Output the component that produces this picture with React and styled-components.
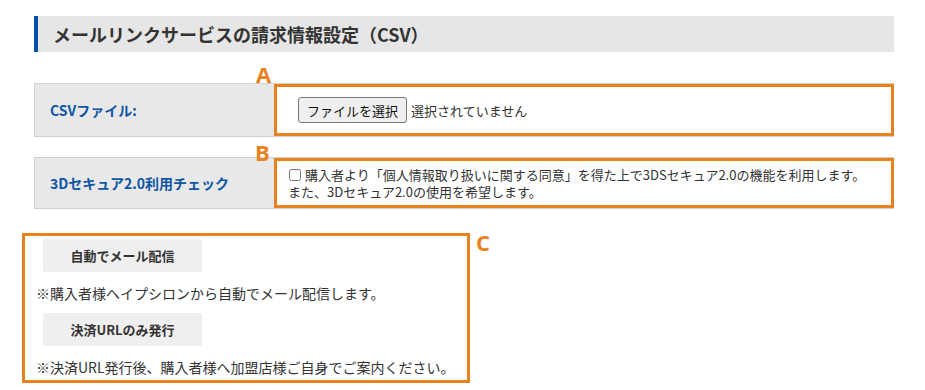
import React from 'react'
import styled, { createGlobalStyle } from 'styled-components'

const ORANGE = '#e8821e'

const GlobalStyle = createGlobalStyle`
  body {
    margin: 0;
    background: #fff;
    font-family: "Noto Sans CJK JP", "Open Sans", sans-serif;
    color: #333;
  }
  * { box-sizing: border-box; }
`

const Page = styled.div`
  width: 894px;
  padding: 16px 0 0 34px;
`

const Title = styled.h2`
  margin: 0;
  height: 36px;
  display: flex;
  align-items: center;
  padding-left: 15px;
  background: #e6e6e6;
  border-left: 4px solid #0a4fa0;
  font-size: 18px;
  font-weight: 700;
  color: #333;
`

const Rows = styled.div`
  display: flex;
  flex-direction: column;
  gap: 20px;
  margin-top: 31px;
`

const Row = styled.div`
  display: grid;
  grid-template-columns: 240px 1fr;
  height: ${p => p.$h}px;
  border-top: 1px solid #d2d2d2;
  border-bottom: 1px solid #d2d2d2;
`

const Label = styled.div`
  display: flex;
  align-items: center;
  padding-left: 15px;
  background: #e8e8e8;
  border-left: 1px solid #d2d2d2;
  font-size: 14px;
  font-weight: 700;
  color: #0d55a5;
`

const Value = styled.div`
  position: relative;
  display: flex;
  align-items: center;
  border: 3px solid ${ORANGE};
  padding-left: ${p => p.$pad}px;
  font-size: 13px;
  color: #333;
`

const Mark = styled.span`
  position: absolute;
  font-family: "Open Sans", "Liberation Sans", sans-serif;
  font-weight: 700;
  font-size: 22px;
  line-height: 22px;
  color: ${ORANGE};
  left: ${p => p.$left}px;
  top: ${p => p.$top}px;
`

const FileButton = styled.button`
  height: 26px;
  padding: 0 8px;
  margin-right: 4px;
  background: #efefef;
  border: 1px solid #767676;
  border-radius: 3px;
  font: inherit;
  font-size: 13px;
  color: #111;
`

const CheckText = styled.label`
  line-height: 17.5px;
  input {
    width: 12px;
    height: 12px;
    margin: 0 4px 0 1px;
    vertical-align: -1px;
  }
`

const SendBox = styled.div`
  position: relative;
  width: 448px;
  height: 150px;
  margin: 24px 0 0 -12px;
  padding: 3px 0 0 11px;
  border: 3px solid ${ORANGE};
`

const SendButton = styled.button`
  display: block;
  width: 159px;
  height: 33px;
  margin-left: 7px;
  border: none;
  border-radius: 2px;
  background: #efefef;
  font: inherit;
  font-size: 13px;
  font-weight: 700;
  color: #333;
`

const Note = styled.p`
  margin: 11px 0 10px;
  font-size: 14px;
  line-height: 20px;
  color: #333;
  white-space: nowrap;
`

export default function App() {
  return (
    <Page>
      <GlobalStyle />
      <Title>メールリンクサービスの請求情報設定（CSV）</Title>
      <Rows>
        <Row $h={54}>
          <Label>CSVファイル:</Label>
          <Value $pad={21}>
            <Mark $left={-21} $top={-24}>A</Mark>
            <FileButton type="button">ファイルを選択</FileButton>
            <span>選択されていません</span>
          </Value>
        </Row>
        <Row $h={52}>
          <Label>3Dセキュア2.0利用チェック</Label>
          <Value $pad={11}>
            <Mark $left={-22} $top={-20}>B</Mark>
            <CheckText>
              <input type="checkbox" />
              購入者より「個人情報取り扱いに関する同意」を得た上で3DSセキュア2.0の機能を利用します。
              <br />
              また、3Dセキュア2.0の使用を希望します。
            </CheckText>
          </Value>
        </Row>
      </Rows>
      <SendBox>
        <Mark $left={451} $top={-5}>C</Mark>
        <SendButton type="button">自動でメール配信</SendButton>
        <Note>※購入者様へイプシロンから自動でメール配信します。</Note>
        <SendButton type="button">決済URLのみ発行</SendButton>
        <Note>※決済URL発行後、購入者様へ加盟店様ご自身でご案内ください。</Note>
      </SendBox>
    </Page>
  )
}
